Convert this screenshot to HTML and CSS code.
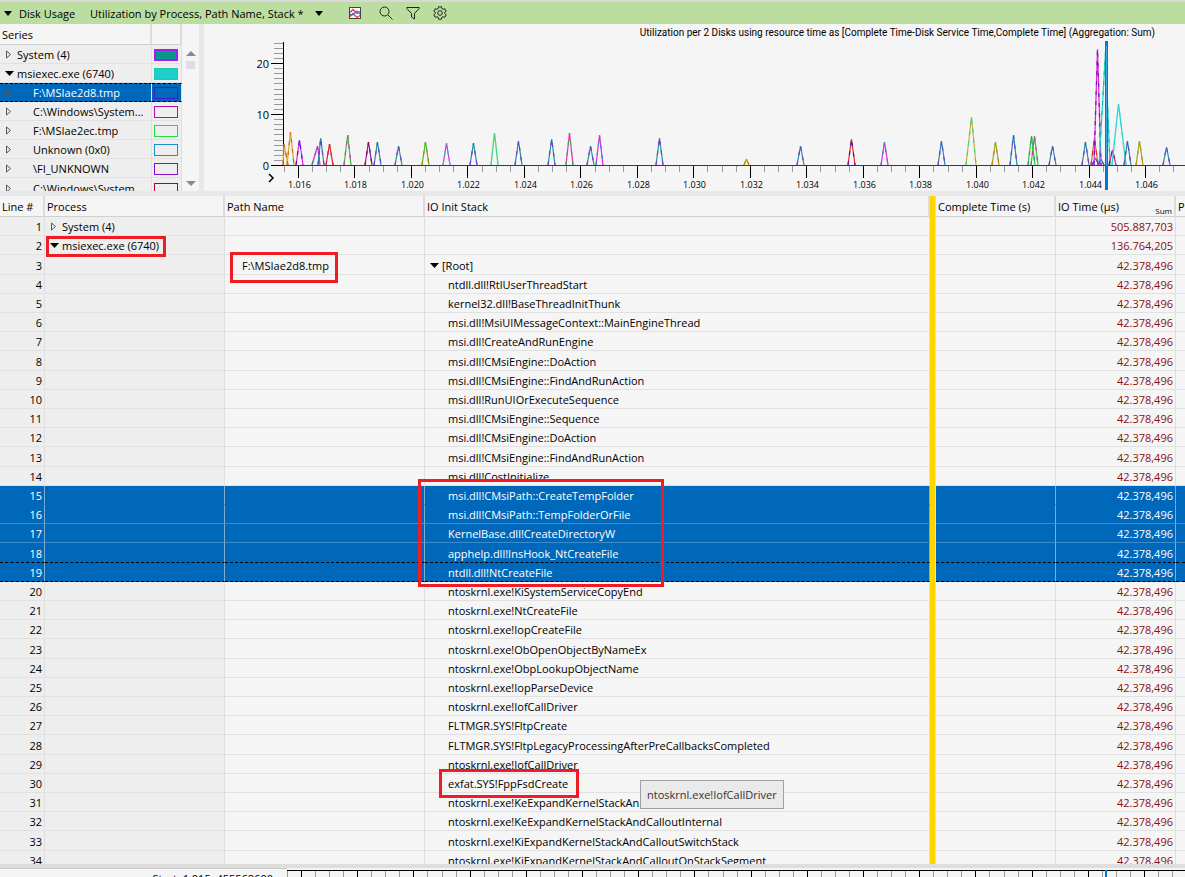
FILE: index.html
```html
<!DOCTYPE html>
<html lang="en">
<head>
    <meta charset="UTF-8">
    <meta name="viewport" content="width=device-width, initial-scale=1.0">
    <title>Disk Usage</title>
    <link rel="stylesheet" href="styles.css">
</head>
<body>
    <header class="toolbar">
        <button class="title-button" aria-label="Collapse">
            <svg width="8" height="5"><path d="M0 0h8L4 5z"/></svg>
        </button>
        <span class="title">Disk Usage</span>
        <button class="preset-button">Utilization by Process, Path Name, Stack *
            <svg width="8" height="5"><path d="M0 0h8L4 5z"/></svg>
        </button>
        <button class="icon-button chart-icon" aria-label="Graph">
            <svg width="14" height="14" viewBox="0 0 14 14" fill="none">
                <rect x="1.5" y="1.5" width="11" height="11" fill="#fff" stroke="#444"/>
                <path d="M2 6.500l3-3 4 4 3-2" stroke="#e0344c" stroke-width="1.300"/>
                <path d="M2 10.500l3-3 4 4 3-2" stroke="#e0344c" stroke-width="1.300"/>
                <path d="M2 8.500l2 .5 5-4 3 3" stroke="#2b7cd3" stroke-width="1.300"/>
            </svg>
        </button>
        <button class="icon-button search-icon" aria-label="Search">
            <svg width="14" height="14" viewBox="0 0 14 14" fill="none" stroke="#222"><circle cx="5.5" cy="5.5" r="4.5"/><path d="M9 9l4.500 4.500"/></svg>
        </button>
        <button class="icon-button filter-icon" aria-label="Filter">
            <svg width="14" height="14" viewBox="0 0 14 14" fill="none" stroke="#222"><path d="M.8 1.500h12.400v1L8.500 7.500V13L5.500 11V7.500L.8 2.500z"/></svg>
        </button>
        <button class="icon-button gear-icon" aria-label="Settings">
            <svg width="14" height="14" viewBox="0 0 14 14" fill="none" stroke="#222">
                <path d="M5.600.8h2.800l.4 1.800 1.200.7 1.800-.6 1.400 2.400L11.800 6.300v1.400l1.400 1.200-1.400 2.400-1.800-.6-1.200.7-.4 1.800H5.600l-.4-1.800-1.200-.7-1.800.6L.8 8.900l1.400-1.200V6.300L.8 5.100l1.400-2.400 1.800.6 1.200-.7z"/>
                <circle cx="7" cy="7" r="2.300"/>
            </svg>
        </button>
    </header>

    <section class="graph-area">
        <div class="series">
            <table class="series-table">
                <thead><tr><th>Series</th><th class="swatch-cell"></th></tr></thead>
                <tbody id="series-rows"></tbody>
            </table>
        </div>
        <div class="scrollbar">
            <svg width="10" height="5"><path d="M0 5h10L5 0z"/></svg>
            <div class="thumb"></div>
            <svg class="down" width="10" height="5"><path d="M0 0h10L5 5z"/></svg>
        </div>
        <div class="chart">
            <svg id="chart" viewBox="204 24 981 167"></svg>
        </div>
    </section>

    <main class="grid">
        <table class="stack-table">
            <colgroup>
                <col class="col-line"><col class="col-process"><col class="col-path"><col class="col-stack">
                <col class="col-bar"><col class="col-time"><col class="col-time"><col class="col-rest">
            </colgroup>
            <thead>
                <tr>
                    <th>Line #</th><th>Process</th><th>Path Name</th><th>IO Init Stack</th>
                    <th class="bar"></th><th>Complete Time (s)</th>
                    <th><div class="io-head">IO Time (µs)<small>Sum</small></div></th><th>P</th>
                </tr>
            </thead>
            <tbody id="stack-rows"></tbody>
        </table>
    </main>

    <footer class="timeline">
        <span class="range">Start: 1.015, 455568600</span>
        <svg id="ruler" viewBox="287 870 898 7"></svg>
    </footer>

    <script>
        const closed = '<button class="toggle" aria-label="Expand"><svg width="7" height="9" viewBox="0 0 7 9"><path d="M1.500 1v7l4-3.500z" fill="none" stroke="#555"/></svg></button>';
        const open = '<button class="toggle" aria-label="Collapse"><svg width="9" height="9"><path d="M0 2h9L4.500 7z"/></svg></button>';

        // name, border colour, fill, level
        const series = [
            ['System (4)', '#a020f0', '#0d9488', 'top thick'],
            ['msiexec.exe (6740)', '#1cc8ae', '#1ccfca', 'top'],
            ['F:\\MSIae2d8.tmp', '#3a1fd0', 'transparent', 'selected'],
            ['C:\\Windows\\System...', '#b010b0', 'transparent', ''],
            ['F:\\MSIae2ec.tmp', '#22dd44', 'transparent', ''],
            ['Unknown (0x0)', '#1a90d0', 'transparent', ''],
            ['\\FI_UNKNOWN', '#8a10c8', 'transparent', ''],
            ['C:\\Windows\\System', '#b00030', 'transparent', '']
        ];
        document.getElementById('series-rows').innerHTML = series.map((s, i) =>
            `<tr class="${s[3]}"><td>${i === 1 ? open : closed}<span class="name">${s[0]}</span></td>
            <td class="swatch-cell"><span class="swatch" style="border-color:${s[1]};background:${s[2]}"></span></td></tr>`
        ).join('');

        const stack = [
            'ntdll.dll!RtlUserThreadStart', 'kernel32.dll!BaseThreadInitThunk',
            'msi.dll!MsiUIMessageContext::MainEngineThread', 'msi.dll!CreateAndRunEngine',
            'msi.dll!CMsiEngine::DoAction', 'msi.dll!CMsiEngine::FindAndRunAction',
            'msi.dll!RunUIOrExecuteSequence', 'msi.dll!CMsiEngine::Sequence',
            'msi.dll!CMsiEngine::DoAction', 'msi.dll!CMsiEngine::FindAndRunAction',
            'msi.dll!CostInitialize', 'msi.dll!CMsiPath::CreateTempFolder',
            'msi.dll!CMsiPath::TempFolderOrFile', 'KernelBase.dll!CreateDirectoryW',
            'apphelp.dll!InsHook_NtCreateFile', 'ntdll.dll!NtCreateFile',
            'ntoskrnl.exe!KiSystemServiceCopyEnd', 'ntoskrnl.exe!NtCreateFile',
            'ntoskrnl.exe!IopCreateFile', 'ntoskrnl.exe!ObOpenObjectByNameEx',
            'ntoskrnl.exe!ObpLookupObjectName', 'ntoskrnl.exe!IopParseDevice',
            'ntoskrnl.exe!IofCallDriver', 'FLTMGR.SYS!FltpCreate',
            'FLTMGR.SYS!FltpLegacyProcessingAfterPreCallbacksCompleted', 'ntoskrnl.exe!IofCallDriver',
            'exfat.SYS!FppFsdCreate', 'ntoskrnl.exe!KeExpandKernelStackAn',
            'ntoskrnl.exe!KeExpandKernelStackAndCalloutInternal',
            'ntoskrnl.exe!KiExpandKernelStackAndCalloutSwitchStack',
            'ntoskrnl.exe!KiExpandKernelStackAndCalloutOnStackSegment'
        ];

        // overlays anchored to the cell they point at
        const marks = {
            15: '<span class="mark mark-stack"></span>',
            30: '<span class="mark mark-driver"></span><span class="tooltip" role="tooltip">ntoskrnl.exe!IofCallDriver</span>'
        };

        function row(n, process, path, frame, time) {
            const cls = n >= 15 && n <= 19 ? 'selected line-' + n : '';
            return `<tr class="${cls}"><td>${n}</td><td>${process}</td><td>${path}</td><td>${frame}</td>
                <td class="bar"></td><td></td><td>${time}</td><td></td></tr>`;
        }
        const rows = [
            row(1, closed + 'System (4)', '', '', '505.887,703'),
            row(2, open + 'msiexec.exe (6740)<span class="mark mark-process"></span>', '', '', '136.764,205'),
            row(3, '', '<span class="path">F:\\MSIae2d8.tmp</span><span class="mark mark-path"></span>', open + '[Root]', '42.378,496')
        ];
        stack.forEach((f, i) => rows.push(
            row(i + 4, '', '', `<span class="frame">${f}</span>${marks[i + 4] || ''}`, '42.378,496')
        ));
        document.getElementById('stack-rows').innerHTML = rows.join('');

        const line = (x1, y1, x2, y2, c, w = 1) =>
            `<path d="M${x1} ${y1}L${x2} ${y2}" stroke="${c}" stroke-width="${w}"/>`;

        // y axis, 0 to 24
        let out = '';
        for (let v = 1; v <= 24; v++) {
            if (v % 10) out += line(274, Math.round(165 - v * 5.1) + .5, 283, Math.round(165 - v * 5.1) + .5, '#999');
        }
        [0, 10, 20].forEach(v => {
            const y = Math.round(165 - v * 5.1) + .5;
            out += line(271, y, 284, y, '#000') + `<text class="y-label" x="269" y="${y + 4}">${v}</text>`;
        });
        out += line(283.5, 42, 283.5, 166, '#000');

        // x axis
        for (let i = -1; i < 63; i++) {
            const x = Math.round(298 + i * 14.12) + .5;
            if (i % 4 === 0) {
                out += line(x, 166, x, 178, '#000')
                    + `<text class="x-label" x="${x + 1}" y="188">${(1.016 + i / 2000).toFixed(3)}</text>`;
            } else {
                out += line(x, 166, x, 172, '#999');
            }
        }

        // left base, peak x, peak y, right base, colour, dash colour
        const teal = '#149a90', violet = '#9028e8', pink = '#ee22cc', olive = '#8cb020', green = '#30c830';
        const peaks = [
            [283, 284, 144, 288, '#d0b020', '#e05020'], [287, 290.5, 132, 294, '#ccb020', '#e06020'],
            [296, 299.5, 140, 303, pink, '#2020d8'], [312, 317.5, 146, 320, pink, teal],
            [318, 320.7, 138, 324, teal, violet], [326, 329.5, 144, 333, '#e02020', '#d02060'],
            [344, 347.7, 135, 351, green, pink], [365, 368.5, 142, 372, '#8818c0', '#900828'],
            [374, 377.5, 142, 381, teal, violet], [395, 398.5, 146, 402, teal, violet],
            [422, 425.5, 142, 429, green, '#d07010'], [443, 446.5, 143, 450, pink, '#20c8e8'],
            [470, 473.5, 143, 477, teal, violet], [491, 494.5, 133, 498, '#60c830', '#20e0e8'],
            [515, 518.5, 141, 522, teal, violet], [548, 551.7, 139, 555, teal, violet],
            [566, 569.5, 133, 573, pink, '#20c020'], [587, 590.5, 146, 594, teal, violet],
            [596, 599.5, 135, 603, pink, '#1898d8'], [656, 659.5, 138, 663, teal, violet],
            [744, 746.5, 159, 749, olive, '#d08010'], [797, 800.5, 146, 804, teal, violet],
            [848, 851.5, 139, 855, '#f02828', '#2020d0'], [881, 884.5, 142, 888, pink, '#2090d8'],
            [938, 941.5, 141, 945, teal, violet], [966, 971.5, 117, 976, '#d4b020', '#20d8b8'],
            [992, 995.5, 142, 999, olive, '#e07010'], [1010, 1013.5, 135, 1017, teal, violet],
            [1028, 1031.5, 136, 1035, green, teal], [1031, 1034.5, 136, 1038, '#20d820', pink],
            [1049, 1052.5, 146, 1056, teal, violet], [1082, 1085.5, 142, 1089, teal, violet],
            [1091, 1094.5, 138, 1098, '#c07818', '#e02020'], [1092, 1095.5, 158, 1099, teal, violet],
            [1094, 1097.5, 49, 1101, '#ee20c8', '#6020d0'], [1099, 1105.5, 52, 1110, '#20d4cc', '#10b8b0'],
            [1098, 1101, 159, 1104, teal, violet], [1109, 1112.5, 150, 1116, '#ee20a0', '#203080'],
            [1112, 1118.5, 104, 1126, '#20d4cc', '#30dcd0'], [1124, 1127.5, 141, 1131, teal, violet],
            [1136, 1139.5, 141, 1143, olive, '#d88010'], [1163, 1166.500, 147, 1170, teal, violet]
        ];
        out += line(283, 165.5, 1185, 165.5, '#3c3450');
        peaks.forEach(([a, x, y, b, c, d]) => {
            const p = `d="M${a} 165L${x} ${y}L${b} 165" fill="none" stroke-width="1.2" stroke-linejoin="bevel"`;
            out += `<path ${p} stroke="${c}"/><path ${p} stroke="${d}" stroke-dasharray="4 6"/>`;
        });

        out += line(1106.5, 41, 1106.5, 190, '#0078d4', 3) + line(1106.5, 46, 1106.5, 165, '#40a8e0');
        out += '<path d="M269 174l4 4-4 4" fill="none" stroke="#000" stroke-width="1.500"/>';
        out += '<text class="chart-title" x="1155" y="36">Utilization per 2 Disks using resource time as [Complete Time-Disk Service Time,Complete Time] (Aggregation: Sum)</text>';
        document.getElementById('chart').innerHTML = out;

        // lower ruler
        let ticks = line(287, 870.5, 1185, 870.5, '#000');
        for (let i = -1; i < 63; i++) {
            const x = Math.round(301 + i * 14.05) + .5;
            ticks += line(x, 871, x, 877, i % 4 ? '#999' : '#000');
        }
        document.getElementById('ruler').innerHTML = ticks + line(1106, 870, 1106, 877, '#0078d4', 2);
    </script>
</body>
</html>
```

FILE: styles.css
```css
* {
    box-sizing: border-box;
}

body {
    margin: 0;
    height: 100vh;
    display: flex;
    flex-direction: column;
    overflow: hidden;
    background: #f5f5f5;
    color: #000;
    font-family: "Open Sans", sans-serif;
    font-size: 11px;
}

button {
    padding: 0;
    border: none;
    background: none;
    font: inherit;
    color: inherit;
}

svg {
    display: block;
}

/* Top bar */
.toolbar {
    display: flex;
    align-items: center;
    height: 24px;
    flex: none;
    padding: 0 4px;
    border-top: 2px solid #d8d8d8;
    background: #bbdea0;
    white-space: nowrap;
}

.title {
    width: 71px;
    margin-left: 7px;
}

.preset-button {
    display: flex;
    align-items: center;
    justify-content: space-between;
    width: 233px;
}

.icon-button {
    margin-left: 14px;
}

.chart-icon {
    margin-left: 25px;
}

.search-icon {
    margin-left: 17px;
}

.filter-icon,
.gear-icon {
    margin-left: 13px;
}

/* Series list and chart */
.graph-area {
    display: flex;
    flex: none;
    height: 172px;
    border-bottom: 5px solid #e8e8e8;
}

.series {
    width: 182px;
    overflow: hidden;
}

table {
    width: 100%;
    border-spacing: 0;
    table-layout: fixed;
}

th {
    height: 21px;
    padding: 2px 2px 0;
    border-right: 2px solid #dcdcdc;
    border-bottom: 1px solid #d0d0d0;
    text-align: left;
    font-weight: normal;
    line-height: 18px;
    white-space: nowrap;
}

td {
    padding: 2px 0 0;
    border-right: 1px solid #dfdfdf;
    border-bottom: 1px solid #e1e1e1;
    line-height: 16px;
    white-space: nowrap;
}

tr:nth-child(5n+3) td {
    line-height: 17px;
}

.series-table td {
    background: #eee;
}

.series-table td:first-child {
    padding-left: 5px;
}

.swatch-cell {
    width: 30px;
}

.name {
    margin-left: 20px;
}

.top .name {
    margin-left: 4px;
}

.toggle {
    width: 8px;
    vertical-align: baseline;
}

.toggle svg {
    overflow: visible;
}

.swatch {
    display: block;
    width: 24px;
    height: 12px;
    margin-left: 2px;
    border: 1px solid;
}

.thick .swatch {
    border-width: 2px;
}

.series-table .selected td {
    padding-top: 1px;
    background: #0068ba;
    color: #fff;
    border-bottom: 1px dashed #000;
    border-top: 1px dashed #000;
    line-height: 16px;
}

.scrollbar {
    display: flex;
    flex-direction: column;
    align-items: center;
    width: 17px;
    padding: 27px 0 5px;
    fill: #8688a0;
}

.thumb {
    width: 9px;
    height: 8px;
    margin-top: 5px;
    background: #dedee8;
}

.down {
    margin-top: auto;
}

.chart {
    flex: 1;
    border-left: 5px solid #e8e8e8;
}

.chart svg {
    width: 100%;
    height: 167px;
}

.x-label {
    font-size: 9px;
    text-anchor: middle;
}

.y-label {
    font-size: 11px;
    text-anchor: end;
}

.chart-title {
    font-family: Roboto, sans-serif;
    font-size: 10px;
    text-anchor: end;
}

/* Stack grid */
.grid {
    flex: 1;
    min-height: 0;
    overflow: hidden;
}

.col-line {
    width: 45px;
}

.col-process {
    width: 180px;
}

.col-path {
    width: 200px;
}

.col-bar {
    width: 6px;
}

.col-time {
    width: 120px;
}

.col-rest {
    width: 9px;
}

.grid td {
    position: relative;
    padding-left: 5px;
}

.grid td:nth-child(1) {
    padding: 2px 2px 0;
    text-align: right;
}

.grid td:nth-child(-n+2) {
    background: #eee;
}

.grid td:nth-child(7) {
    padding: 2px 2px 0;
    text-align: right;
    color: #8b1010;
}

.grid th:last-child,
.grid td:last-child {
    border-right: none;
}

.grid .bar {
    padding: 0;
    border-width: 0 1px 0 0;
    background: #ffd500;
    background-clip: padding-box;
}

.grid .toggle {
    margin-right: 4px;
}

.path {
    margin-left: 12px;
}

.frame {
    margin-left: 18px;
}

.io-head {
    display: flex;
    justify-content: space-between;
    align-items: flex-end;
}

.io-head small {
    font-size: 8px;
    line-height: 11px;
}

.grid .selected td:not(.bar) {
    background: #0068ba;
    border-right-color: #7eabd0;
    border-bottom-color: #3c8cca;
    color: #fff;
}

.grid .line-15 td:not(.bar) {
    border-bottom-color: #0068ba;
}

.grid .line-18 td:not(.bar),
.grid .line-19 td:not(.bar) {
    border-bottom: 1px dashed #000;
}

/* Annotations over the grid */
.mark {
    position: absolute;
    z-index: 1;
    border: 3px solid #ee1c24;
}

.mark-process {
    left: 1px;
    top: 0;
    width: 120px;
    height: 21px;
}

.mark-path {
    left: 5px;
    top: -3px;
    width: 108px;
    height: 31px;
}

.mark-stack {
    left: -7px;
    top: -7px;
    width: 246px;
    height: 108px;
}

.mark-driver {
    left: 14px;
    top: -5px;
    width: 140px;
    height: 29px;
}

.tooltip {
    position: absolute;
    z-index: 2;
    left: 215px;
    top: 6px;
    padding: 6px;
    border: 1px solid #a0a0a0;
    background: #eaeaea;
    color: #333;
    line-height: 15px;
}

/* Next pane, mostly below the window edge */
.timeline {
    display: flex;
    flex: none;
    height: 13px;
    overflow: hidden;
    border-top: 4px solid #dedede;
}

.range {
    width: 287px;
    padding-right: 14px;
    text-align: right;
    line-height: 20px;
    border-top: 1px solid #ccc;
}

.timeline svg {
    flex: 1;
    height: 7px;
    margin-top: 2px;
}
```
